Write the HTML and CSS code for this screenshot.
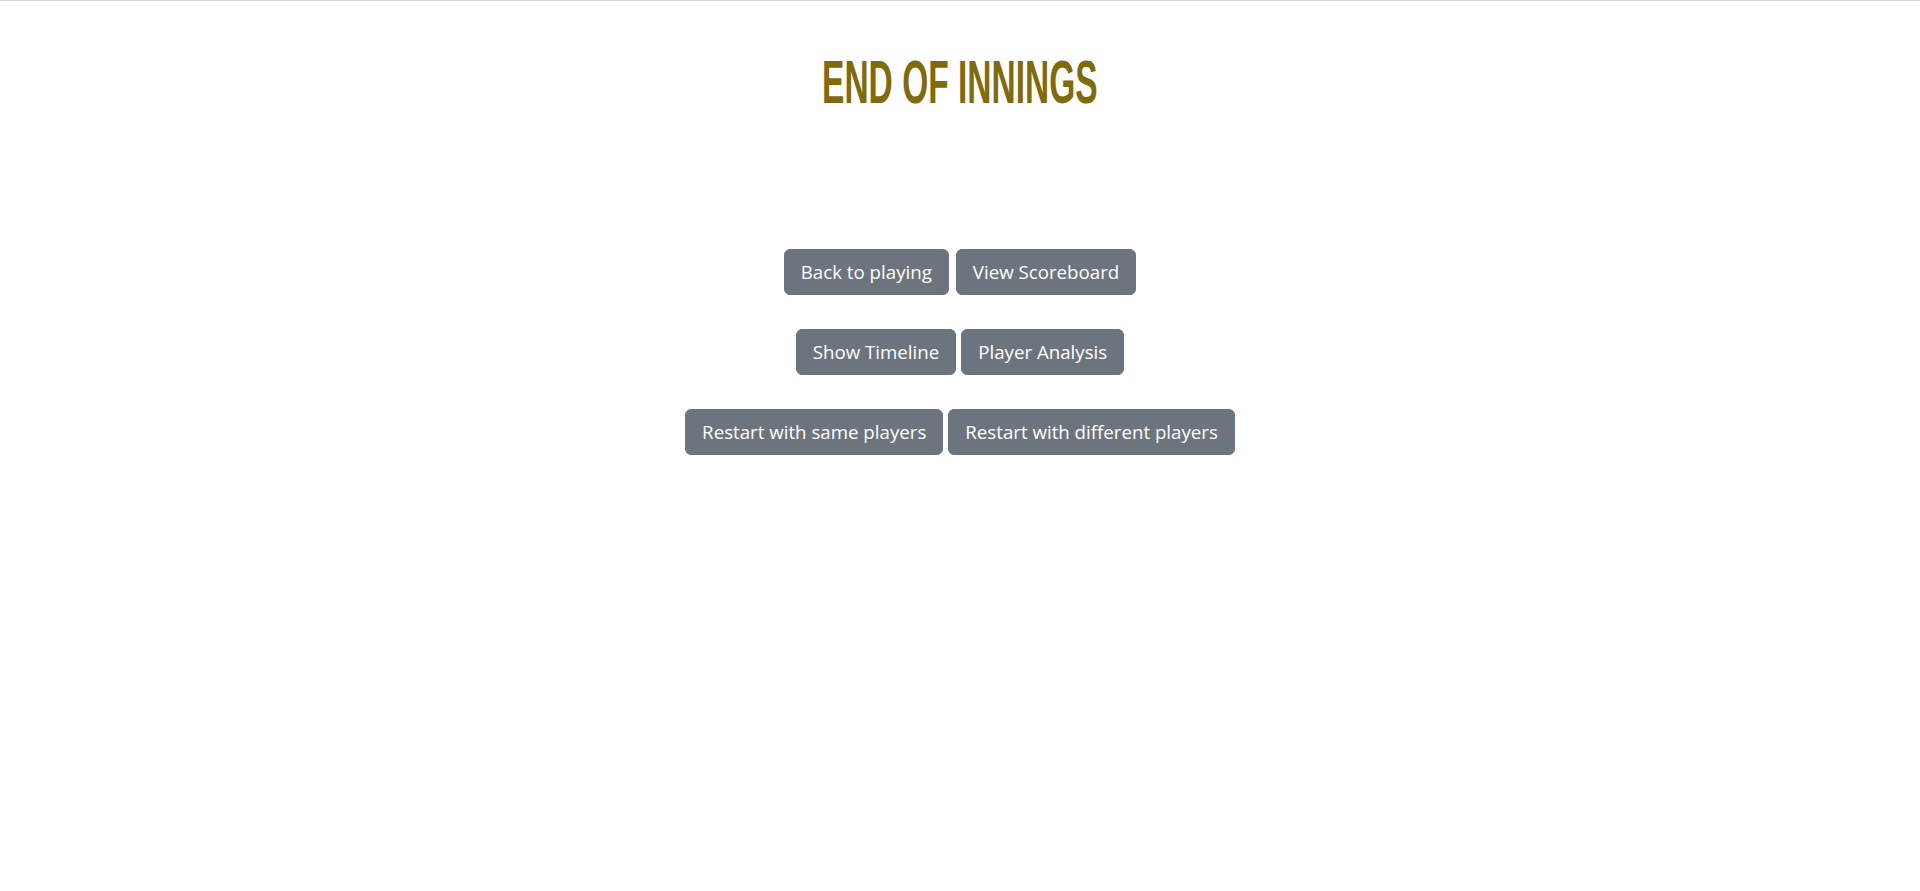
FILE: index.html
```html
<!DOCTYPE html>
<html lang="en">
<head>
<meta charset="utf-8">
<title>End of Innings</title>
<link rel="stylesheet" href="styles.css">
</head>
<body>
<main class="page">
  <header class="title-wrap">
    <h1 class="title">End of Innings</h1>
  </header>
  <section class="actions">
    <div class="action-row action-row--wide">
      <button class="btn" type="button">Back to playing</button>
      <button class="btn" type="button">View Scoreboard</button>
    </div>
    <div class="action-row">
      <button class="btn" type="button">Show Timeline</button>
      <button class="btn" type="button">Player Analysis</button>
    </div>
    <div class="action-row">
      <button class="btn" type="button">Restart with same players</button>
      <button class="btn" type="button">Restart with different players</button>
    </div>
  </section>
</main>
</body>
</html>
```

FILE: styles.css
```css
html, body {
  margin: 0;
  padding: 0;
  background: #ffffff;
}

.page {
  border-top: 1px solid #d3d3d3;
  min-height: 890px;
}

.title-wrap {
  display: flex;
  justify-content: center;
  padding-top: 50px;
}

.title {
  margin: 0;
  font-family: "Liberation Sans", Arial, sans-serif;
  font-weight: 700;
  font-size: 61.5px;
  line-height: 1;
  text-transform: uppercase;
  color: #7f6a0c;
  display: inline-block;
  transform: scaleX(0.545);
  white-space: nowrap;
}

.actions {
  margin-top: 136px;
  display: flex;
  flex-direction: column;
  gap: 34px;
}

.action-row {
  display: flex;
  justify-content: center;
  gap: 5px;
}

.action-row--wide {
  gap: 7px;
}

.btn {
  font-family: "Segoe UI", "Open Sans", sans-serif;
  font-size: 18.7px;
  line-height: 28px;
  color: #ffffff;
  background: #6c757d;
  border: 1px solid #6c757d;
  border-radius: 6px;
  padding: 8px 16px;
  margin: 0;
  cursor: pointer;
}
```
